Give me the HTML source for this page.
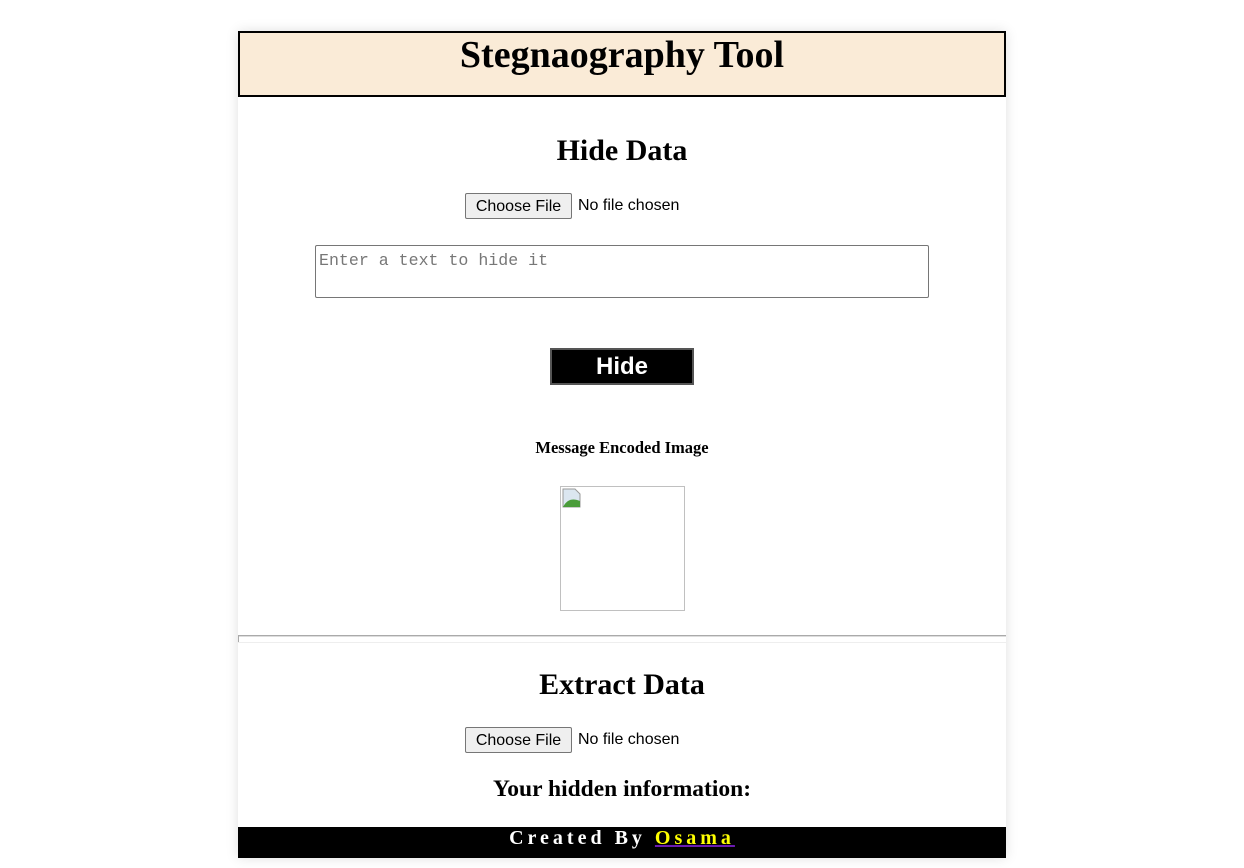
<!DOCTYPE html>
<html><head><style>
body{margin:0;background:#fff;width:1244px;height:868px;position:relative;overflow:hidden;font-family:"Liberation Serif",serif}
.wrap{position:absolute;left:238px;top:31px;width:768px;height:827px;box-shadow:0 0 12px rgba(0,0,0,.12);background:#fff}
.a{position:absolute}
.hdr{left:238px;top:31px;width:764px;height:62px;border:2px solid #000;background:#faebd7;text-align:center}
.hdr div{font-size:38px;font-weight:bold;line-height:44px;margin-top:0px}
.c{left:238px;width:768px;text-align:center;font-weight:bold}
.btn{background:#efefef;border:1px solid #767676;border-radius:2px;font:16px "Liberation Sans",sans-serif;box-sizing:border-box;text-align:center;line-height:24px}
.nf{font:16px "Liberation Sans",sans-serif}
</style></head><body>
<div class="wrap"></div>
<div class="a hdr"><div>Stegnaography Tool</div></div>
<div class="a c" style="top:133px;font-size:30px;line-height:36px">Hide Data</div>
<div class="a btn" style="left:465px;top:193px;width:107px;height:26px;line-height:25px">Choose File</div>
<div class="a nf" style="left:578px;top:197px">No file chosen</div>
<div class="a" style="left:315px;top:245px;width:612px;height:51px;border:1px solid #767676;border-radius:2px"></div>
<div class="a" style="left:319px;top:251px;font:16.6px 'Liberation Mono',monospace;color:#777">Enter a text to hide it</div>
<div class="a" style="left:550px;top:348px;width:140px;height:33px;background:#000;border:2px solid #555;color:#fff;font:bold 24px 'Liberation Sans',sans-serif;text-align:center;line-height:33px">Hide</div>
<div class="a c" style="top:438px;font-size:16.5px;line-height:20px">Message Encoded Image</div>
<div class="a" style="left:560px;top:486px;width:123px;height:123px;border:1px solid #c0c0c0"></div>
<svg class="a" style="left:562px;top:488px" width="20" height="20"><path d="M1 1h12l5 5v13H1z" fill="#dbe6f0" stroke="#999"/><path d="M1 19c4-8 10-9 17-6v6z" fill="#4a9c3a"/></svg>
<div class="a" style="left:238px;top:635px;width:768px;height:1px;background:#aaa;border-bottom:1px solid #ddd"></div>
<div class="a" style="left:238px;top:636px;width:1px;height:6px;background:#aaa"></div>
<div class="a" style="left:238px;top:642px;width:768px;height:1px;background:#eee"></div>
<div class="a c" style="top:667px;font-size:30px;line-height:36px">Extract Data</div>
<div class="a btn" style="left:465px;top:727px;width:107px;height:26px;line-height:25px">Choose File</div>
<div class="a nf" style="left:578px;top:731px">No file chosen</div>
<div class="a c" style="top:775px;font-size:23.5px;line-height:28px">Your hidden information:</div>
<div class="a" style="left:238px;top:827px;width:768px;height:31px;background:#000;color:#fff;text-align:center;font-weight:bold;font-size:20px;letter-spacing:4px;line-height:22px">Created By <span style="color:#ff0;text-decoration:underline;text-decoration-color:#6a1bb0">Osama</span></div>
</body></html>
